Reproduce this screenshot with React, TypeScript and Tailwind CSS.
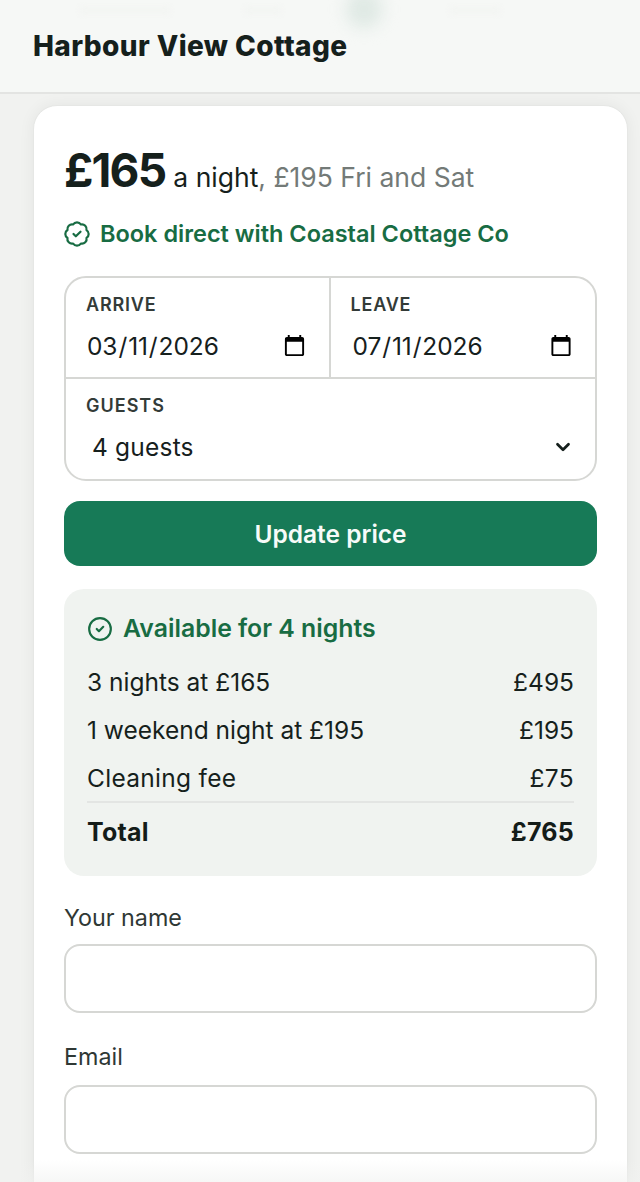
import { BadgeCheck, ChevronDown, CircleCheck } from 'lucide-react';

const inter = { fontFamily: 'Inter, sans-serif' };

const rows = [
  { label: '3 nights at £165', amount: '£495', tracking: '' },
  { label: '1 weekend night at £195', amount: '£195', tracking: '' },
  { label: 'Cleaning fee', amount: '£75', tracking: 'tracking-[0.3px]' },
];

const DateField = ({ label, value, border }: { label: string; value: string; border?: boolean }) => (
  <label className={`flex flex-col h-[99px] pt-[15px] pl-[20px] pr-[20px] ${border ? 'border-r-2 border-[#d6d7d4]' : ''}`}>
    <span className="text-[18px] leading-[24px] font-semibold tracking-[0.8px] text-[#333b38]">{label}</span>
    <input
      type="date"
      defaultValue={value}
      className={`mt-[11px] w-full h-[36px] text-[24.5px] text-[#16201d] bg-transparent outline-none tracking-[-0.1px] ${border ? '' : 'pl-[1px]'}`}
    />
  </label>
);

export default function App() {
  return (
    <div className="relative w-[640px] h-[1182px] overflow-hidden bg-[#f1f2f0] text-[#161f1c]" style={inter}>
      <header className="relative h-[94px] overflow-hidden border-b-2 border-[#e3e4e2] bg-[#f6f8f6] pl-[33px] pt-[27px]">
        {/* page content blurred behind the sticky bar */}
        <div className="absolute left-[346px] top-[-10px] w-[36px] h-[38px] rounded-full bg-[#dfe9e4] blur-[8px]" />
        <div className="absolute left-[80px] top-[8px] w-[90px] h-[5px] bg-[#f2f4f1] blur-[3px]" />
        <div className="absolute left-[245px] top-[8px] w-[36px] h-[5px] bg-[#f2f4f1] blur-[3px]" />
        <div className="absolute left-[450px] top-[8px] w-[50px] h-[5px] bg-[#f2f4f1] blur-[3px]" />
        <h1 className="relative text-[28px] leading-[38px] font-extrabold tracking-[0.4px] text-[#15201c]">Harbour View Cottage</h1>
      </header>

      <main className="ml-[33px] mt-[11px] w-[595px] rounded-t-[24px] border border-[#e6e7e5] bg-white px-[30px] pt-[37px] h-[1100px] shadow-[0_0_16px_rgba(0,0,0,0.06)]">
        <div className="flex items-baseline h-[54px]">
          <span className="text-[46px] leading-[54px] font-bold tracking-[-1.8px] text-[#15201c]">£165</span>
          <span className="ml-[8px] text-[26.5px] text-[#161f1c]">a night</span>
          <span className="text-[26.5px] text-[#737a77]">, £195 Fri and Sat</span>
        </div>

        <div className="mt-[21px] flex items-center gap-[9px] h-[32px]">
          <BadgeCheck size={28} strokeWidth={1.9} className="-ml-[1px] text-[#186c43]" />
          <span className="text-[23.5px] font-semibold text-[#186c43]">Book direct with Coastal Cottage Co</span>
        </div>

        <div className="mt-[26px] rounded-[22px] border-2 border-[#d6d7d4] overflow-hidden">
          <div className="grid grid-cols-2 border-b-2 border-[#d6d7d4]">
            <DateField label="ARRIVE" value="2026-03-11" border />
            <DateField label="LEAVE" value="2026-07-11" />
          </div>
          <label className="relative flex flex-col h-[100px] pt-[15px] pl-[20px] pr-[22px]">
            <span className="text-[18px] leading-[24px] font-semibold tracking-[1px] text-[#333b38]">GUESTS</span>
            <select defaultValue="4" className="appearance-none mt-[11px] w-full h-[36px] pl-[6px] text-[24.5px] text-[#16201d] bg-transparent outline-none tracking-[0.2px]">
              <option value="4">4 guests</option>
            </select>
            <ChevronDown size={22} strokeWidth={3} className="absolute right-[21px] top-[57px] text-[#16201d]" />
          </label>
        </div>

        <button className="mt-[20px] block w-full h-[65px] pt-[2px] rounded-[16px] bg-[#177a57] text-[24.5px] font-semibold text-[#f7fbf9]">
          Update price
        </button>

        <section className="mt-[23px] h-[287px] rounded-[20px] bg-[#f0f3f0] px-[23px] pt-[22px]">
          <div className="flex items-center gap-[10px] h-[36px]">
            <CircleCheck size={26} strokeWidth={2} className="text-[#186c43]" />
            <span className="text-[24.8px] font-semibold text-[#186c43]">Available for 4 nights</span>
          </div>
          <div className="mt-[17px] flex flex-col gap-[12px]">
            {rows.map((row) => (
              <div key={row.label} className={`flex justify-between h-[36px] items-center text-[24.5px] text-[#161f1c] ${row.tracking}`}>
                <span>{row.label}</span>
                <span>{row.amount}</span>
              </div>
            ))}
          </div>
          <div className="mt-[5px] border-t-2 border-[#e3e5e3] pt-[13px] flex justify-between h-[48px] items-center text-[25px] font-bold tracking-[0.2px] text-[#141c19]">
            <span>Total</span>
            <span>£765</span>
          </div>
        </section>

        <label className="block mt-[26px]">
          <span className="block text-[23.3px] leading-[32px] text-[#2f3835]">Your name</span>
          <input className="mt-[10px] block w-full h-[69px] rounded-[16px] border-2 border-[#d6d7d4] bg-white" />
        </label>
        <label className="block mt-[28px]">
          <span className="block text-[23.3px] leading-[32px] text-[#2f3835]">Email</span>
          <input className="mt-[12px] block w-full h-[69px] rounded-[16px] border-2 border-[#d6d7d4] bg-white" />
        </label>
      </main>

      <div className="absolute left-0 right-0 bottom-0 h-[22px] bg-gradient-to-b from-transparent to-[#f1f2f0]/60" />
    </div>
  );
}
